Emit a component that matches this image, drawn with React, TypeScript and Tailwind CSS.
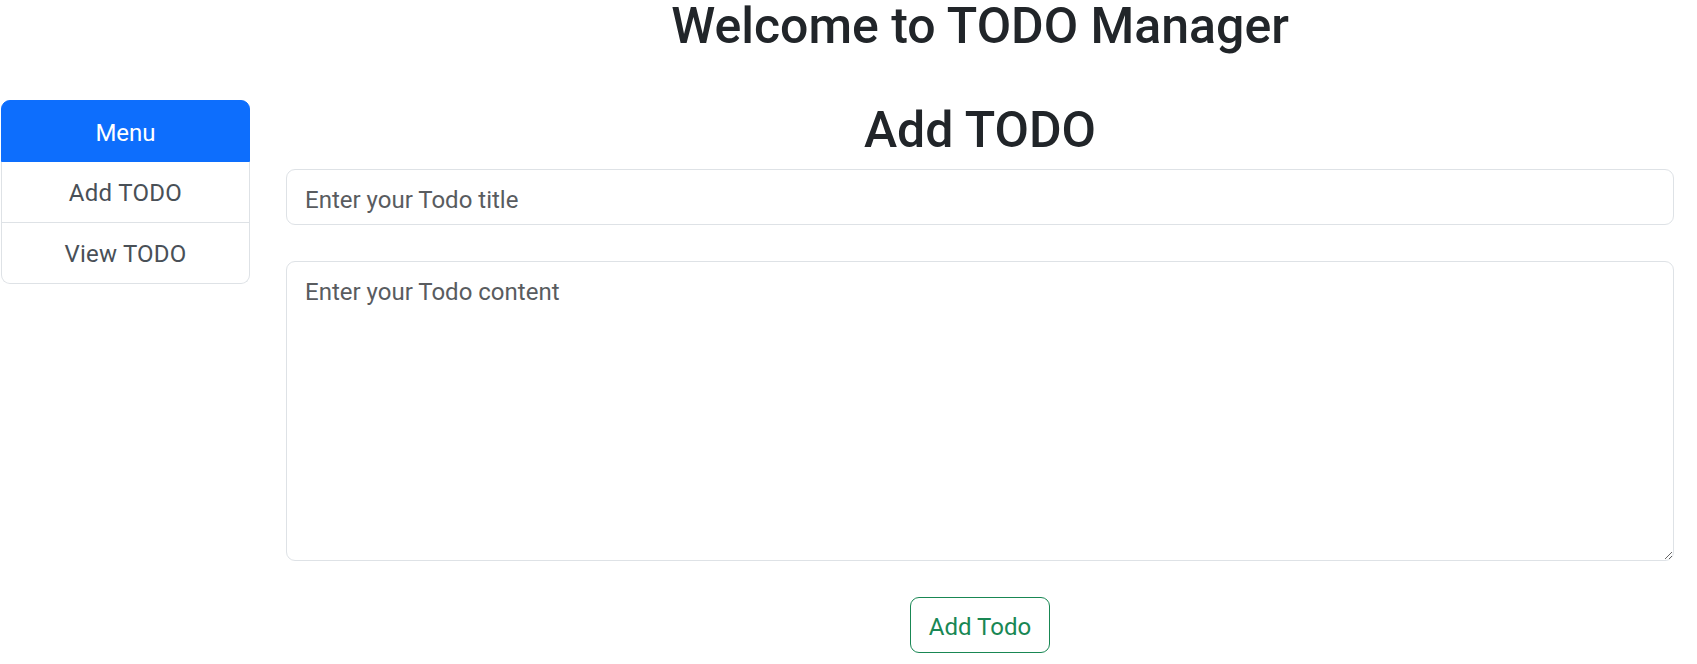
import React from "react";

export default function App() {
  return (
    <div
      className="flex w-full bg-white text-[#212529]"
      style={{ fontFamily: "Roboto, 'Noto Sans', sans-serif" }}
    >
      <aside className="w-[250px] shrink-0 pl-[1px] pt-[100px]">
        <div className="flex flex-col text-center text-[24px] leading-[36px]">
          <div className="rounded-t-[9px] border border-[#0d6efd] bg-[#0d6efd] px-[24px] pt-[14px] pb-[10px] text-white">
            Menu
          </div>
          <div className="border-x border-b border-[#dee2e6] px-[24px] pt-[13px] pb-[11px] tracking-[0.3px] text-[#495057]">
            Add TODO
          </div>
          <div className="rounded-b-[9px] border-x border-b border-[#dee2e6] px-[24px] pt-[13px] pb-[11px] tracking-[0.2px] text-[#495057]">
            View TODO
          </div>
        </div>
      </aside>

      <main className="ml-[36px] mr-[23px] flex min-w-0 flex-1 flex-col items-center">
        <h1 className="pt-[1px] text-[50px] font-medium leading-[50px] text-[#212529]">
          Welcome to TODO Manager
        </h1>
        <h2 className="mt-[54px] text-[50px] font-medium leading-[50px] text-[#212529]">
          Add TODO
        </h2>
        <input
          type="text"
          placeholder="Enter your Todo title"
          className="mt-[14px] box-border h-[56px] w-full rounded-[9px] border border-[#dee2e6] bg-white px-[18px] pt-[12px] pb-[6px] text-[24px] leading-[36px] text-[#212529] outline-none placeholder:text-[#595c5f]"
        />
        <textarea
          placeholder="Enter your Todo content"
          className="mt-[36px] box-border h-[300px] w-full resize-y rounded-[9px] border border-[#dee2e6] bg-white px-[18px] pt-[12px] pb-[6px] text-[24px] leading-[36px] text-[#212529] outline-none placeholder:text-[#595c5f]"
        />
        <button
          type="button"
          className="mt-[36px] box-border h-[56px] rounded-[9px] border border-[#198754] bg-white px-[18px] pt-[11px] pb-[7px] text-[24px] leading-[36px] text-[#198754]"
        >
          Add Todo
        </button>
      </main>
    </div>
  );
}
